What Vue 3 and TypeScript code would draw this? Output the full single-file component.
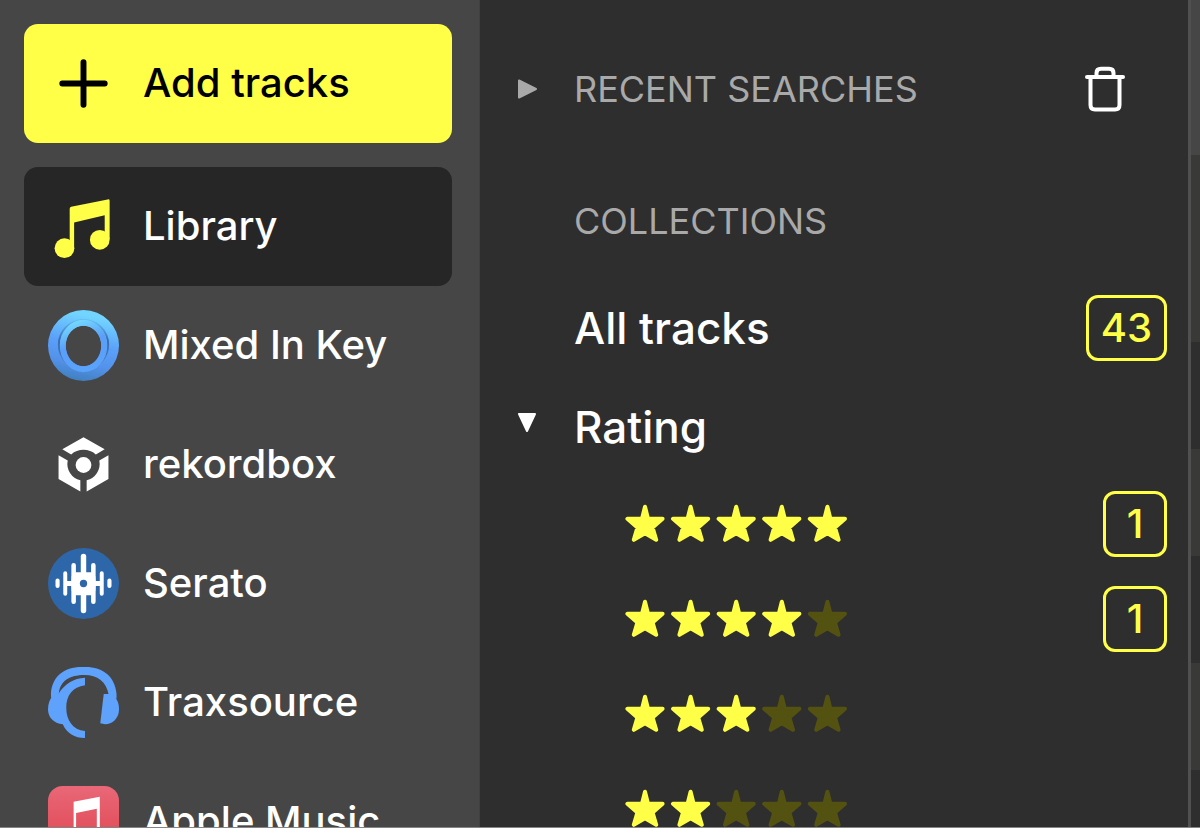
<script setup lang="ts">
interface Source {
  id: string
  label: string
}

interface Rating {
  stars: number
  count: number | null
}

const sources: Source[] = [
  { id: 'library', label: 'Library' },
  { id: 'mixed', label: 'Mixed In Key' },
  { id: 'rekordbox', label: 'rekordbox' },
  { id: 'serato', label: 'Serato' },
  { id: 'traxsource', label: 'Traxsource' },
  { id: 'apple', label: 'Apple Music' },
]

const ratings: Rating[] = [
  { stars: 5, count: 1 },
  { stars: 4, count: 1 },
  { stars: 3, count: null },
  { stars: 2, count: null },
]

const starPath = 'M20 2.7 23 14.7H37.6L27.6 23.5 31.2 35.8 20 29.2 8.8 35.8 12.4 23.5 2.4 14.7H17Z'
</script>

<template>
  <div class="app">
    <aside class="sidebar">
      <button class="item add" type="button">
        <svg class="icon" viewBox="0 0 72 72" aria-hidden="true">
          <path d="M36 14.500V57.500M14.500 36H57.500" fill="none" stroke="#000" stroke-width="6" stroke-linecap="round" />
        </svg>
        <span class="name">Add tracks</span>
      </button>

      <nav class="sources" aria-label="Sources">
        <a v-for="s in sources" :key="s.id" href="#" class="item" :class="{ active: s.id === 'library' }">
          <svg v-if="s.id === 'library'" class="icon" viewBox="0 0 72 72" aria-hidden="true">
            <g fill="#ffff47">
              <path d="M22 18Q22 16.500 23.500 16L60.500 8.500Q62.500 8.100 62.500 9.800V49H57.500V24.500L26.500 32V58H22Z" />
              <circle cx="16.700" cy="58" r="10" />
              <circle cx="52.500" cy="49.500" r="10" />
            </g>
          </svg>

          <svg v-else-if="s.id === 'mixed'" class="icon" viewBox="0 0 72 72" aria-hidden="true">
            <defs>
              <linearGradient id="ring" x1="0.600" y1="0" x2="0.400" y2="1">
                <stop offset="0.080" stop-color="#72d5ff" />
                <stop offset="0.480" stop-color="#5aa0fa" />
                <stop offset="0.750" stop-color="#5492ea" />
                <stop offset="1" stop-color="#3f7fbd" />
              </linearGradient>
              <linearGradient id="ring-inner" x1="0.300" y1="0" x2="0.600" y2="1">
                <stop offset="0" stop-color="#72d5ff" />
                <stop offset="0.450" stop-color="#5a9ffa" />
                <stop offset="1" stop-color="#5aa2fb" />
              </linearGradient>
              <linearGradient id="ring-gap" x1="0" y1="0" x2="0" y2="1">
                <stop offset="0" stop-color="#4e98cf" stop-opacity="0.300" />
                <stop offset="0.400" stop-color="#3c6da9" />
                <stop offset="1" stop-color="#4478b8" />
              </linearGradient>
            </defs>
            <path fill="url(#ring)" fill-rule="evenodd" d="M36 0A36 36 0 1 1 36 72A36 36 0 1 1 36 0ZM36 16C25.500 16 18 25 18 36S25.500 57 36 57S54 47 54 36S46.500 16 36 16Z" />
            <ellipse cx="36" cy="35" rx="25" ry="25" fill="none" stroke="url(#ring-gap)" stroke-width="2" />
            <ellipse cx="36" cy="36.500" rx="21" ry="23.500" fill="none" stroke="url(#ring-inner)" stroke-width="6" />
          </svg>

          <svg v-else-if="s.id === 'rekordbox'" class="icon" viewBox="0 0 72 72" aria-hidden="true">
            <g fill="#fff">
              <path d="M36 8.300 57.500 20.500 48.500 25.800A19 19 0 0 0 23.500 25.800L14.500 20.500Z" />
              <path d="M10.700 26.600 20 32A17 17 0 0 0 32.800 52V63.300L10.700 50.600Z" />
              <path d="M61.300 26.600 52 32A17 17 0 0 1 39.200 52V63.300L61.300 50.600Z" />
              <circle cx="36" cy="36.500" r="8" />
            </g>
          </svg>

          <svg v-else-if="s.id === 'serato'" class="icon" viewBox="0 0 72 72" aria-hidden="true">
            <circle cx="36" cy="36" r="36" fill="#2e67a9" />
            <g stroke="#fff" stroke-linecap="round" fill="none">
              <path stroke-width="5.500" d="M36 8.500V63.500" />
              <path stroke-width="4.600" d="M26 17.500V54.500M46 17.500V54.500" />
              <path stroke-width="4" d="M17.500 25.500V46.500M54.500 25.500V46.500" />
              <path stroke-width="4.200" d="M9.700 33V38.500M62.300 33V38.500" />
              <path stroke-width="5" d="M19 36H53" />
            </g>
            <path fill="#fff" d="M28 24.500H44L48 29Q49 36 48 43L44 48H28L24 43Q23 36 24 29Z" />
            <circle cx="36" cy="36" r="3.700" fill="#2e67a9" />
          </svg>

          <svg v-else-if="s.id === 'traxsource'" class="icon" viewBox="0 0 72 72" aria-hidden="true">
            <g fill="#5ea2fc">
              <path d="M3 31V27C4 10 16 0 34 0H38C56 0 68 10 69.500 27V32H61.500V28C59.500 15 50 8 37 8C22 8 12 14 11 27V33Z" />
              <path d="M10.500 27.500C17 17 26 11.500 37.500 11V18.500C25 20 18.500 29 18.500 41C18.500 54 25 63.500 37.500 65V72C27 72 19 67 15 58C6 57 0 51 0 43C0 37 2 33 4 30Z" />
              <path d="M56.500 27.500H64L69 32C71.500 36 72 39 72 43C72 52 65 58 58 58L53 57Z" />
            </g>
          </svg>

          <svg v-else class="icon" viewBox="0 0 72 72" aria-hidden="true">
            <defs>
              <linearGradient id="apple-bg" x1="0" y1="0" x2="0" y2="1">
                <stop offset="0" stop-color="#e96878" />
                <stop offset="0.550" stop-color="#e3525f" />
                <stop offset="1" stop-color="#e04553" />
              </linearGradient>
            </defs>
            <rect width="72" height="72" rx="15" fill="url(#apple-bg)" />
            <path fill="#fff" d="M26 16 52.500 11V50H49.500V23L28.500 27.500V56H26Z" />
            <circle cx="22" cy="54" r="6.500" fill="#fff" />
            <circle cx="46" cy="49" r="6.500" fill="#fff" />
          </svg>
          <span class="name">{{ s.label }}</span>
        </a>
      </nav>
    </aside>

    <main class="panel">
      <header class="row recent">
        <button class="toggle muted" type="button" aria-expanded="false">
          <svg class="arrow" viewBox="0 0 22 22" aria-hidden="true">
            <path d="M3 2.500 20 11 3 19.500Z" fill="currentColor" stroke="currentColor" stroke-width="2" stroke-linejoin="round" />
          </svg>
          <span class="caption">RECENT SEARCHES</span>
        </button>
        <button class="trash" type="button" aria-label="Clear recent searches">
          <svg viewBox="0 0 40 46" aria-hidden="true">
            <g fill="none" stroke="#fff" stroke-width="4" stroke-linecap="round" stroke-linejoin="round">
              <path d="M2 11H38" />
              <path d="M5.500 11V39Q5.500 43.500 10 43.500H30Q34.500 43.500 34.500 39V11" />
              <path d="M11.500 10V7Q11.500 2.700 16 2.700H24Q28.500 2.700 28.500 7V10" />
            </g>
          </svg>
        </button>
      </header>

      <h2 class="row caption muted collections">COLLECTIONS</h2>

      <div class="row all">
        <a href="#" class="label">All tracks</a>
        <span class="badge">43</span>
      </div>

      <div class="row rating-head">
        <button class="toggle" type="button" aria-expanded="true">
          <svg class="arrow up" viewBox="0 0 22 22" aria-hidden="true">
            <path d="M3 2H19L11 19Z" fill="currentColor" stroke="currentColor" stroke-width="2" stroke-linejoin="round" />
          </svg>
          <span class="label">Rating</span>
        </button>
      </div>

      <ul class="ratings">
        <li v-for="r in ratings" :key="r.stars" class="row rating">
          <a href="#" class="stars" :aria-label="`${r.stars} stars`">
            <svg viewBox="0 0 224 40" aria-hidden="true">
              <path
                v-for="n in 5"
                :key="n"
                :d="starPath"
                :transform="`translate(${(n - 1) * 45.6} 0)`"
                :class="n <= r.stars ? 'on' : 'off'"
              />
            </svg>
          </a>
          <span v-if="r.count !== null" class="badge">{{ r.count }}</span>
        </li>
      </ul>
    </main>

    <div class="table-edge" aria-hidden="true">
      <div class="edge-head"></div>
      <div class="edge-filter"></div>
      <div v-for="n in 5" :key="n" class="edge-row"></div>
    </div>
  </div>
</template>

<style>
body {
  margin: 0;
  background: #2e2e2e;
}
</style>

<style scoped>
* {
  box-sizing: border-box;
}

.app {
  display: grid;
  grid-template-columns: 40% 1fr 12px;
  height: 100vh;
  overflow: hidden;
  border-bottom: 1px solid #858585;
  background: #2e2e2e;
  color: #fff;
  font-family: Inter, "Liberation Sans", sans-serif;
  font-size: 40px;
  font-weight: 500;
  line-height: 48px;
}

button {
  margin: 0;
  padding: 0;
  border: 0;
  background: none;
  color: inherit;
  font: inherit;
  text-align: left;
  cursor: pointer;
}

a {
  color: inherit;
  text-decoration: none;
}

svg {
  display: block;
  flex: none;
}

.sidebar {
  display: flex;
  flex-direction: column;
  gap: 24px;
  min-height: 0;
  overflow: hidden;
  padding: 24px 27px 0 24px;
  border-right: 1px solid #404040;
  background: #464646;
}

.sources {
  display: flex;
  flex-direction: column;
}

.item {
  display: flex;
  flex: none;
  align-items: center;
  gap: 24px;
  width: 100%;
  height: 119px;
  padding: 0 24px;
  border-radius: 14px;
  white-space: nowrap;
}

.name {
  padding-bottom: 2px;
}

.add {
  background: #ffff47;
  color: #000;
}

.active {
  background: #262626;
}

.icon {
  width: 71px;
  height: 71px;
}

.panel {
  min-width: 0;
  min-height: 0;
  overflow: hidden;
  padding: 40px 21px 0 36px;
}

.row {
  display: flex;
  align-items: center;
  justify-content: space-between;
}

.muted {
  color: #a9a9a9;
}

.caption {
  font-size: 36px;
  font-weight: 400;
}

.toggle {
  display: flex;
  align-items: center;
  gap: 36px;
  white-space: nowrap;
}

.arrow {
  width: 22px;
  height: 22px;
}

.up {
  margin-bottom: 8px;
}

.recent {
  height: 98px;
  padding-right: 42px;
}

.trash svg {
  width: 40px;
  height: 46px;
}

.collections {
  height: 98px;
  margin: 34px 0 0;
  padding-left: 58px;
}

.all {
  height: 116px;
  padding-left: 58px;
}

.label {
  font-size: 44px;
}

.rating-head {
  height: 82px;
}

.badge {
  display: flex;
  align-items: center;
  justify-content: center;
  height: 66px;
  min-width: 64px;
  padding: 0 12px;
  border: 3px solid #ffff47;
  border-radius: 12px;
  color: #ffff47;
}

.ratings {
  margin: 8px 0 0;
  padding: 0;
  list-style: none;
}

.rating {
  height: 95px;
  padding-left: 109px;
}

.stars svg {
  width: 224px;
  height: 40px;
}

.on {
  fill: #ffff47;
  stroke: #ffff47;
  stroke-width: 4;
  stroke-linejoin: round;
}

.off {
  fill: #545211;
  stroke: #545211;
  stroke-width: 4;
  stroke-linejoin: round;
}

.table-edge {
  min-height: 0;
  overflow: hidden;
  border-left: 3px solid #505050;
}

.edge-head {
  height: 155px;
  background: #464646;
}

.edge-filter {
  height: 187px;
  background: #393937;
}

.edge-row {
  height: 107px;
  background: #2e2e2e;
}

.edge-row:nth-child(even) {
  background: #393937;
}
</style>
